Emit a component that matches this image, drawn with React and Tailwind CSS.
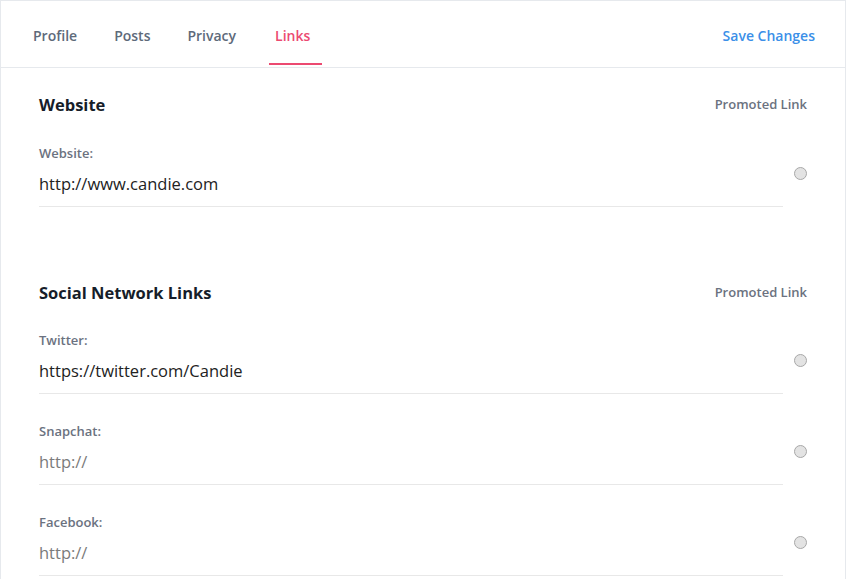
const font = { fontFamily: '"Open Sans", "Noto Sans", sans-serif' }

const tabs = ["Profile", "Posts", "Privacy", "Links"]

const Radio = () => (
  <span className="block w-[13px] h-[13px] rounded-full border border-[#a8a8a8] bg-[#e3e3e3]"></span>
)

const LinkRow = ({ label, value, placeholder }) => (
  <div className="flex items-center">
    <div className="flex-1 pt-[4px] pb-[10px] border-b border-[#e8e8e8]">
      <div className="text-[13px] leading-[18px] font-semibold text-[#6b7280]">{label}</div>
      <div className={`mt-[10px] text-[16.5px] leading-[24px] ${value ? "text-[#222222]" : "text-[#7b7b7b]"}`}>
        {value || placeholder}
      </div>
    </div>
    <div className="w-[24px] flex justify-end">
      <Radio />
    </div>
  </div>
)

const SectionHead = ({ title }) => (
  <div className="flex items-center justify-between h-[24px]">
    <h2 className="text-[16.5px] font-bold text-[#161d29]">{title}</h2>
    <span className="text-[13px] font-semibold text-[#6b7280]">Promoted Link</span>
  </div>
)

export default function App() {
  return (
    <div className="w-[846px] min-h-[579px] bg-white border-t border-l border-r border-[#e6e9ed]" style={font}>
      <div className="h-[67px] flex justify-between items-stretch pl-[26px] pr-[30px] border-b border-[#e6e9ed]">
        <div className="flex gap-[25px]">
          {tabs.map((t) => (
            <div key={t} className={`flex flex-col pt-[25px] ${t === "Links" ? "ml-[2px]" : ""}`}>
              <div className={`pl-[6px] text-[14px] leading-[20px] font-semibold ${t === "Links" ? "pr-[12px] text-[#ec4a71]" : "pr-[6px] text-[#5e6a7a]"}`}>
                {t}
              </div>
              <div className={`mt-auto mb-[2px] h-[2px] ${t === "Links" ? "bg-[#ec4a71]" : ""}`}></div>
            </div>
          ))}
        </div>
        <div className="pt-[25px] text-[14px] leading-[20px] font-semibold text-[#3b8fe8]">
          Save Changes
        </div>
      </div>

      <div className="pl-[38px] pr-[38px] pt-[25px]">
        <SectionHead title="Website" />
        <div className="mt-[23px]">
          <LinkRow label="Website:" value="http://www.candie.com" />
        </div>

        <div className="mt-[74px]">
          <SectionHead title="Social Network Links" />
        </div>
        <div className="mt-[22px] flex flex-col gap-[24px]">
          <LinkRow label="Twitter:" value="https://twitter.com/Candie" />
          <LinkRow label="Snapchat:" placeholder="http://" />
          <LinkRow label="Facebook:" placeholder="http://" />
        </div>
      </div>
    </div>
  )
}
